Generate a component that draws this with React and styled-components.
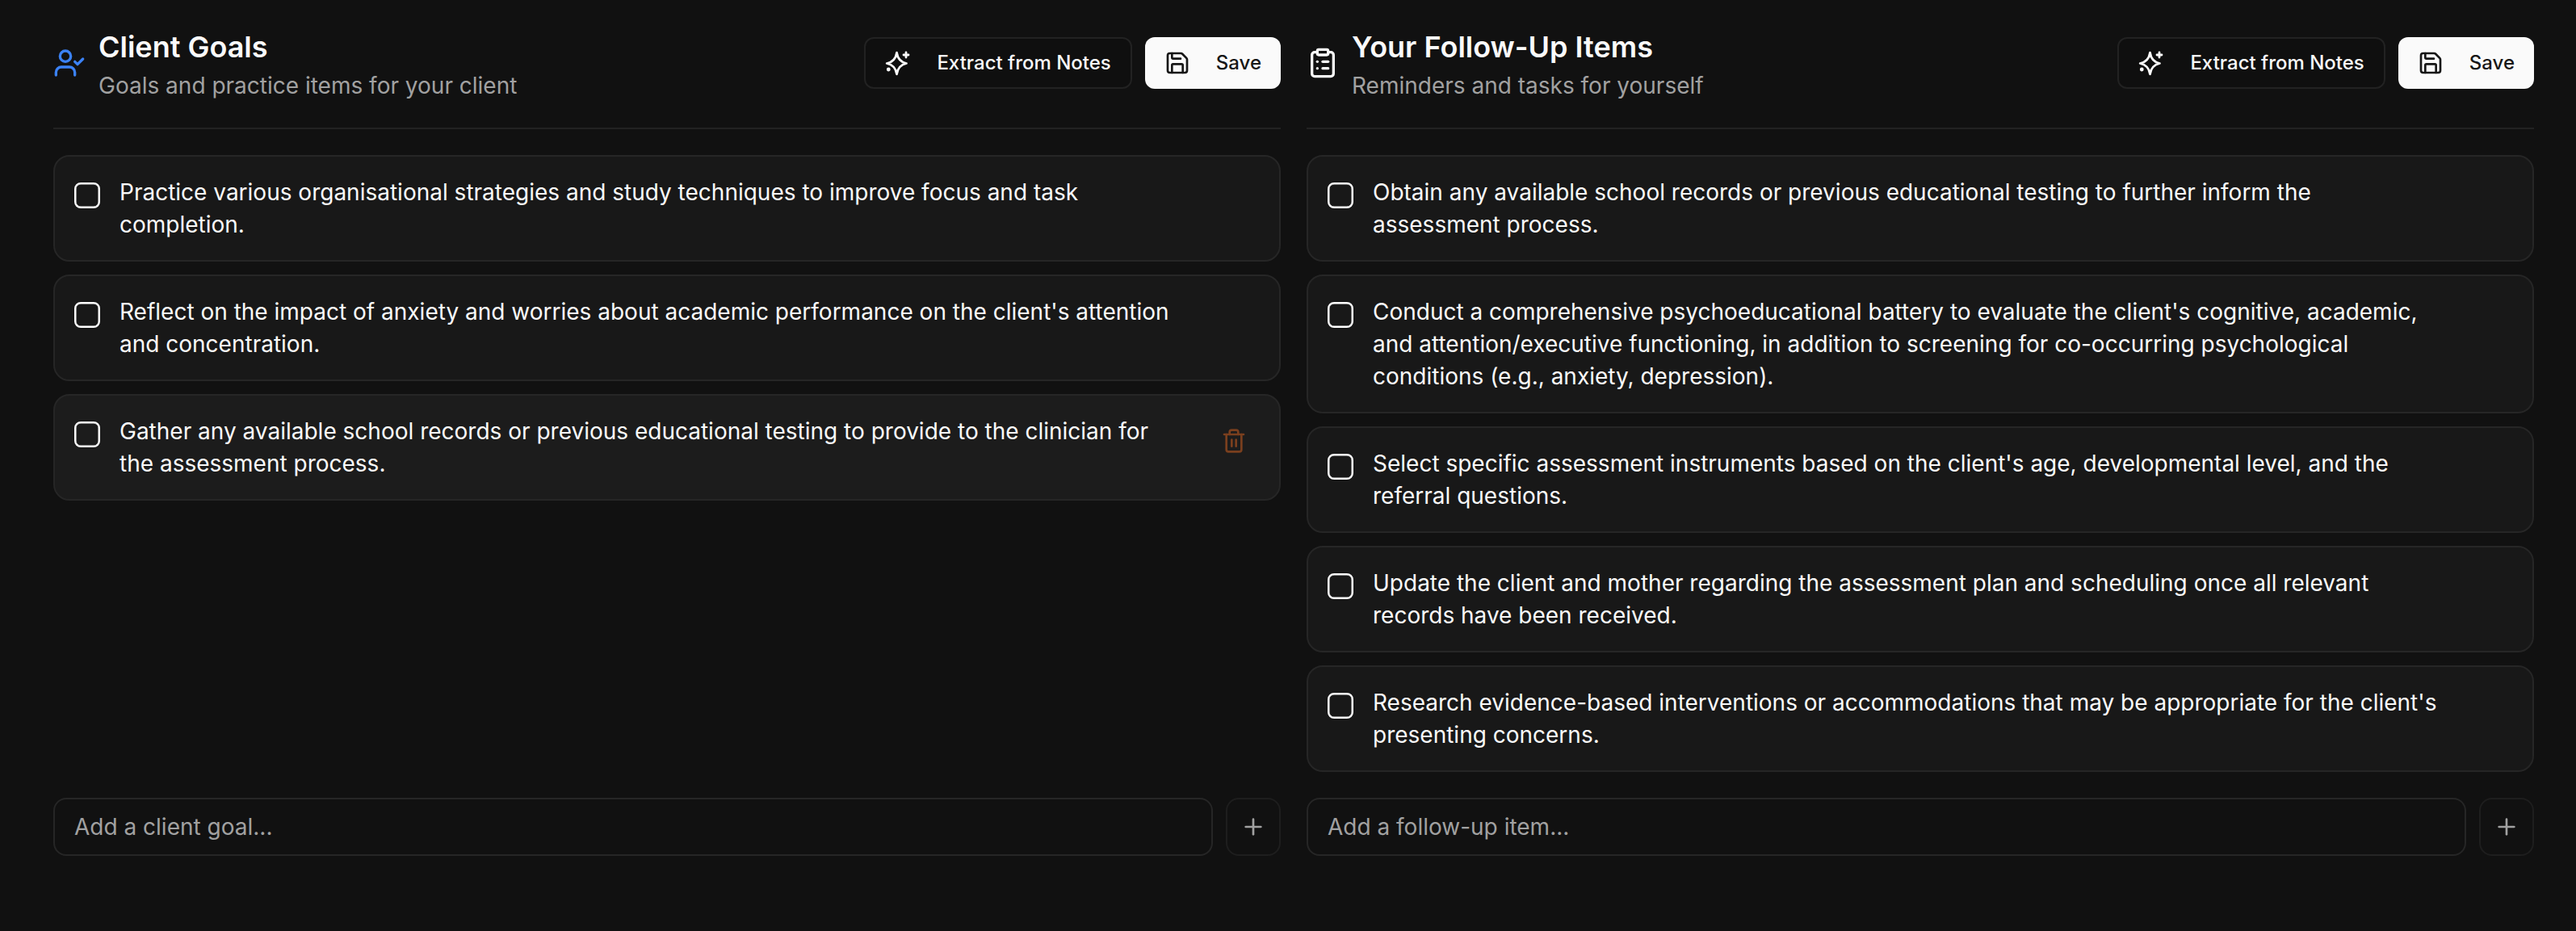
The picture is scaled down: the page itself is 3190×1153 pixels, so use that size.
import React from "react";
import styled, { createGlobalStyle } from "styled-components";
import { UserCheck, ClipboardList, Save, Trash2, Plus } from "lucide-react";

const Global = createGlobalStyle`
  html, body { margin: 0; padding: 0; background: #111111; }
  body { font-family: Inter, "Noto Sans", sans-serif; color: #fafafa; }
  * { box-sizing: border-box; }
`;

const Page = styled.div`
  display: grid;
  grid-template-columns: 1fr 1fr;
  gap: 32px;
  min-height: 1153px;
  padding: 30px 52px 0 66px;
  background: #111111;
  align-items: start;
`;

const Panel = styled.section`
  display: flex;
  flex-direction: column;
  align-self: stretch;
  height: 1030px;
`;

const Header = styled.header`
  display: flex;
  align-items: center;
  justify-content: space-between;
  padding-bottom: 32px;
  border-bottom: 2px solid #222222;
`;

const TitleGroup = styled.div`
  display: flex;
  align-items: center;
  gap: 16px;
`;

const IconSlot = styled.span`
  display: flex;
  color: ${(p) => p.$color};
`;

const Title = styled.h2`
  margin: 0;
  font-size: 36px;
  line-height: 56px;
  font-weight: 600;
  color: #fafafa;
`;

const Subtitle = styled.p`
  margin: 0;
  font-size: 28px;
  line-height: 40px;
  color: #a1a1a1;
`;

const Actions = styled.div`
  display: flex;
  gap: 16px;
`;

const ActionButton = styled.button`
  display: flex;
  align-items: center;
  gap: 32px;
  height: 64px;
  padding: 0 24px;
  font: 500 24px/32px Inter, sans-serif;
  border-radius: 12px;
  border: ${(p) => (p.$primary ? "none" : "2px solid #222222")};
  background: ${(p) => (p.$primary ? "#fafafa" : "#0f0f0f")};
  color: ${(p) => (p.$primary ? "#171717" : "#fafafa")};
`;

const List = styled.div`
  display: flex;
  flex-direction: column;
  gap: 16px;
  flex: 1;
  padding: 32px 0;
`;

const Card = styled.div`
  display: flex;
  align-items: flex-start;
  gap: 24px;
  padding: 24px;
  border: 2px solid #262626;
  border-radius: 20px;
  background: ${(p) => (p.$hover ? "#1c1c1c" : "#181818")};
`;

const Check = styled.span`
  flex: none;
  width: 32px;
  height: 32px;
  margin-top: 8px;
  border: 2px solid #ffffff;
  border-radius: 8px;
  box-shadow: inset 0 0 0 0.5px #ffffff;
`;

const ItemText = styled.p`
  flex: 1;
  margin: 0;
  font-size: 28px;
  line-height: 40px;
  color: #fafafa;
`;

const DeleteButton = styled.button`
  flex: none;
  display: flex;
  align-items: center;
  justify-content: center;
  width: 64px;
  height: 64px;
  padding: 0;
  border: none;
  background: transparent;
  color: #7a3f1e;
  visibility: ${(p) => (p.$show ? "visible" : "hidden")};
`;

const AddRow = styled.div`
  display: flex;
  gap: 16px;
`;

const AddInput = styled.input`
  flex: 1;
  height: 72px;
  padding: 0 24px;
  border: 2px solid #262626;
  border-radius: 16px;
  background: transparent;
  color: #fafafa;
  font: 400 28px Inter, sans-serif;
  outline: none;
  &::placeholder { color: #a1a1a1; opacity: 1; }
`;

const AddButton = styled.button`
  flex: none;
  display: flex;
  align-items: center;
  justify-content: center;
  width: 68px;
  height: 72px;
  padding: 0;
  border: 2px solid #1e1e1e;
  border-radius: 16px;
  background: transparent;
  color: #a1a1a1;
`;

const SparkleIcon = () => (
  <svg width="32" height="32" viewBox="0 0 32 32" fill="none" stroke="currentColor" strokeWidth="2.8" strokeLinecap="round" strokeLinejoin="round">
    <path d="M14.5 3.2C15.6 10.5 19.5 15 26.5 16.5C19.5 18 15.6 22.5 14.5 29.8C13.4 22.5 9.5 18 2.2 16.5C9.5 15 13.4 10.5 14.5 3.2Z" />
    <path d="M26 3v6M23 6h6" />
    <circle cx="4.3" cy="24" r="1" fill="currentColor" />
  </svg>
);

const panels = [
  {
    title: "Client Goals",
    subtitle: "Goals and practice items for your client",
    icon: UserCheck,
    color: "#3b82f6",
    placeholder: "Add a client goal...",
    items: [
      "Practice various organisational strategies and study techniques to improve focus and task completion.",
      "Reflect on the impact of anxiety and worries about academic performance on the client's attention and concentration.",
      "Gather any available school records or previous educational testing to provide to the clinician for the assessment process.",
    ],
    hover: 2,
  },
  {
    title: "Your Follow-Up Items",
    subtitle: "Reminders and tasks for yourself",
    icon: ClipboardList,
    color: "#fafafa",
    placeholder: "Add a follow-up item...",
    items: [
      "Obtain any available school records or previous educational testing to further inform the assessment process.",
      "Conduct a comprehensive psychoeducational battery to evaluate the client's cognitive, academic, and attention/executive functioning, in addition to screening for co-occurring psychological conditions (e.g., anxiety, depression).",
      "Select specific assessment instruments based on the client's age, developmental level, and the referral questions.",
      "Update the client and mother regarding the assessment plan and scheduling once all relevant records have been received.",
      "Research evidence-based interventions or accommodations that may be appropriate for the client's presenting concerns.",
    ],
    hover: -1,
  },
];

export default function App() {
  return (
    <>
      <Global />
      <Page>
        {panels.map((p) => {
          const Icon = p.icon;
          return (
            <Panel key={p.title}>
              <Header>
                <TitleGroup>
                  <IconSlot $color={p.color}><Icon size={40} /></IconSlot>
                  <div>
                    <Title>{p.title}</Title>
                    <Subtitle>{p.subtitle}</Subtitle>
                  </div>
                </TitleGroup>
                <Actions>
                  <ActionButton><SparkleIcon />Extract from Notes</ActionButton>
                  <ActionButton $primary><Save size={32} />Save</ActionButton>
                </Actions>
              </Header>
              <List>
                {p.items.map((t, i) => (
                  <Card key={t} $hover={i === p.hover}>
                    <Check />
                    <ItemText>{t}</ItemText>
                    <DeleteButton $show={i === p.hover}><Trash2 size={32} /></DeleteButton>
                  </Card>
                ))}
              </List>
              <AddRow>
                <AddInput placeholder={p.placeholder} />
                <AddButton><Plus size={32} /></AddButton>
              </AddRow>
            </Panel>
          );
        })}
      </Page>
    </>
  );
}
